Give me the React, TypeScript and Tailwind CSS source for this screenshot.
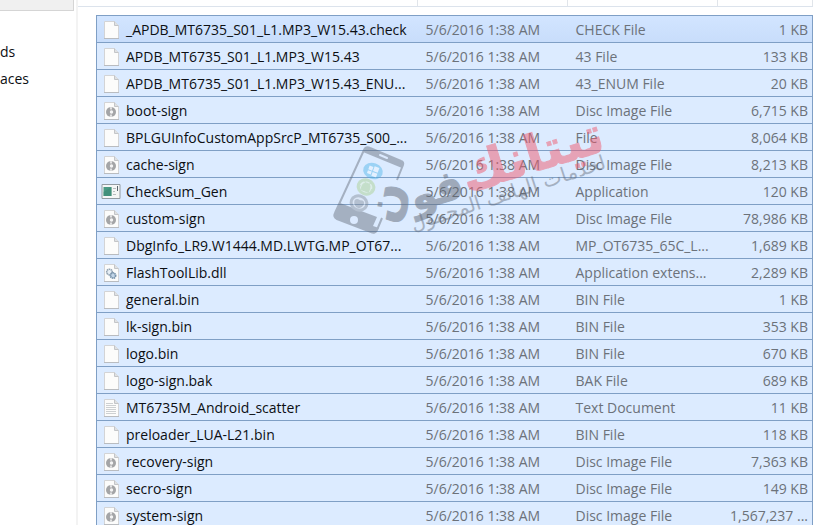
import type { ReactNode } from "react";

type Kind = "blank" | "disc" | "app" | "dll" | "text";

type FileRow = {
  name: string;
  type: string;
  size: string;
  kind: Kind;
};

const MODIFIED = "5/6/2016 1:38 AM";

const files: FileRow[] = [
  { name: "_APDB_MT6735_S01_L1.MP3_W15.43.check", type: "CHECK File", size: "1 KB", kind: "blank" },
  { name: "APDB_MT6735_S01_L1.MP3_W15.43", type: "43 File", size: "133 KB", kind: "blank" },
  { name: "APDB_MT6735_S01_L1.MP3_W15.43_ENU...", type: "43_ENUM File", size: "20 KB", kind: "blank" },
  { name: "boot-sign", type: "Disc Image File", size: "6,715 KB", kind: "disc" },
  { name: "BPLGUInfoCustomAppSrcP_MT6735_S00_...", type: "File", size: "8,064 KB", kind: "blank" },
  { name: "cache-sign", type: "Disc Image File", size: "8,213 KB", kind: "disc" },
  { name: "CheckSum_Gen", type: "Application", size: "120 KB", kind: "app" },
  { name: "custom-sign", type: "Disc Image File", size: "78,986 KB", kind: "disc" },
  { name: "DbgInfo_LR9.W1444.MD.LWTG.MP_OT67...", type: "MP_OT6735_65C_L...", size: "1,689 KB", kind: "blank" },
  { name: "FlashToolLib.dll", type: "Application extens...", size: "2,289 KB", kind: "dll" },
  { name: "general.bin", type: "BIN File", size: "1 KB", kind: "blank" },
  { name: "lk-sign.bin", type: "BIN File", size: "353 KB", kind: "blank" },
  { name: "logo.bin", type: "BIN File", size: "670 KB", kind: "blank" },
  { name: "logo-sign.bak", type: "BAK File", size: "689 KB", kind: "blank" },
  { name: "MT6735M_Android_scatter", type: "Text Document", size: "11 KB", kind: "text" },
  { name: "preloader_LUA-L21.bin", type: "BIN File", size: "118 KB", kind: "blank" },
  { name: "recovery-sign", type: "Disc Image File", size: "7,363 KB", kind: "disc" },
  { name: "secro-sign", type: "Disc Image File", size: "149 KB", kind: "disc" },
  { name: "system-sign", type: "Disc Image File", size: "1,567,237 ...", kind: "disc" },
];

const marks: Record<Kind, ReactNode> = {
  blank: null,
  app: null,
  disc: (
    <>
      <circle cx="10" cy="10" r="5" fill="#a4a5a7" />
      <path d="M8.500 5.200 10 8.500 11.500 5.200ZM8.500 14.800 10 11.500 11.500 14.800Z" fill="#e8e8e8" />
      <circle cx="10.500" cy="10" r="1.700" fill="#f4f4f4" />
    </>
  ),
  dll: (
    <>
      <circle cx="8.500" cy="8" r="2.800" fill="#e6eef5" stroke="#95a5b4" strokeWidth="1.600" strokeDasharray="1.500 .5" />
      <circle cx="12" cy="11.500" r="2.600" fill="#c2d5e7" stroke="#7893ab" strokeWidth="1.800" strokeDasharray="1.400 .5" />
    </>
  ),
  text: <path d="M5 4.500h7M5 6.500h10M5 8.500h10M5 10.500h10M5 12.500h10M5 14.500h10" stroke="#cdd0d2" />,
};

function FileIcon({ kind }: { kind: Kind }) {
  if (kind === "app") {
    return (
      <svg viewBox="0 0 20 18" className="h-[18px] w-5 shrink-0" aria-hidden="true">
        <path d="M1 1.500h18v14H1z" fill="#f5f6f6" stroke="#929ba2" />
        <path d="M2.500 4h8v9h-8z" fill="#4a9a84" />
        <path d="M2.500 9 10.500 4v9h-8z" fill="#378572" opacity=".5" />
        <path d="M12 5.500h3M12 8.500h2M12 11.500h3" stroke="#b9bec0" />
        <path d="M16.500 3v5" stroke="#59646b" />
      </svg>
    );
  }
  return (
    <svg viewBox="0 0 20 18" className="h-[18px] w-5 shrink-0" aria-hidden="true">
      <path d="M3.500.5h10l4 4v13h-14z" fill="#fcfcfb" stroke="#d3d4d6" />
      <path d="M3 17.500h15" stroke="#b9bcc0" />
      <path d="M13.500.5v4h4" fill="#dfe1e3" stroke="#c3c5c8" />
      {marks[kind]}
    </svg>
  );
}

function Watermark() {
  return (
    <svg
      viewBox="0 0 300 170"
      className="pointer-events-none absolute top-[84px] left-[330px] h-[170px] w-[300px] overflow-visible"
      role="img"
      aria-label="تيتانك فون"
    >
      {/* Phone */}
      <g opacity=".45" transform="translate(0 20)">
        <path
          d="M67 76 73 61Q74 58 71 57L40 44Q36 42 34 46L5 109Q3 113 7 115L41 128Q45 130 47 126L52 114"
          fill="none"
          stroke="#626a78"
          strokeWidth="2"
        />
        <path d="M34 46Q36 42 40 44L71 57Q74 58 73 61L72 64 33 48Z" fill="#626a78" />
        <path d="m50 51 7 3" stroke="#dceaff" strokeWidth="2" strokeLinecap="round" />
        <path d="M10 99 47 113 43 122 49 124 47 126Q45 130 41 128L7 115Q3 113 5 109Z" fill="#626a78" />
        <circle cx="24" cy="116" r="4" fill="#dceaff" />
        <g transform="translate(43 67) rotate(20)">
          <ellipse rx="10" ry="8" fill="#4db5ea" />
          <path d="M-5-4h4v4h-4zM0-5h5v5H0zM-5 1h4v3h-4zM0 1h5v4H0z" fill="#eef8ff" />
        </g>
        <g transform="translate(36 83) rotate(20)">
          <ellipse rx="8" ry="7" fill="#dff1d2" stroke="#a8d08b" strokeWidth="3" />
          <path d="M-4 0a4 4 0 0 1 8 0v4h-8zM-6 0v3M6 0v3M-2-4l-2-2M2-4l2-2" fill="#a8d08b" stroke="#a8d08b" />
        </g>
        <g transform="translate(29 99) rotate(20)">
          <ellipse rx="8" ry="7" fill="#dbe2ec" stroke="#858d98" strokeWidth="3" />
          <path d="M0-3Q5-5 5 0 4 5 1 5H-1Q-5 3-5-1-4-4 0-3ZM0-3l2-3" fill="#858d98" />
        </g>
      </g>
      <g fontFamily="'DejaVu Sans', sans-serif" direction="rtl">
        <text
          transform="translate(277 66) rotate(-17)"
          fontSize="51"
          fontWeight="bold"
          fill="#f05c70"
          stroke="#f05c70"
          opacity=".5"
        >
          تيتانك
        </text>
        <g fontWeight="bold" fill="#626a78" stroke="#626a78" opacity=".5">
          <text transform="translate(136 112) rotate(-17)" fontSize="42">فو</text>
          <text transform="translate(70 121) rotate(-80)" fontSize="47" textAnchor="middle">ن</text>
        </g>
        <text transform="translate(277 84) rotate(-18)" fontSize="20" fill="#626a78" opacity=".45">
          لخدمات الهاتف المحمول
        </text>
      </g>
    </svg>
  );
}

export default function App() {
  return (
    <div className="relative flex h-screen overflow-hidden bg-white font-['Open_Sans','Noto_Sans',sans-serif] text-sm text-[#0c0f13]">
      {/* Navigation pane, scrolled off to the left */}
      <nav className="w-[78px] shrink-0 border-r-2 border-[#f3f3f3]">
        <div className="h-[11px] w-[74px] border-r border-b border-[#d5d5d5] bg-[#f0f0f0]" />
        <div className="mt-[27px] flex flex-col">
          <a href="#downloads" className="leading-[27px]">ds</a>
          <a href="#places" className="leading-[27px]">aces</a>
        </div>
      </nav>

      <main className="min-w-0 flex-1 pr-[13px]">
        {/* Bottom edge of the column headings */}
        <div className="flex h-[7px] border-b border-[#dce3ec]">
          <div className="w-[340px] border-r border-[#e1e5ea]" />
          <div className="w-[150px] border-r border-[#e1e5ea]" />
          <div className="w-[150px] border-r border-[#e1e5ea]" />
          <div className="flex-1 border-r border-[#e1e5ea]" />
        </div>

        <div className="mt-2 pl-[18px]">
          <table className="w-full table-fixed border-collapse border border-[#7f9fc5]">
            <colgroup>
              <col className="w-[321px]" />
              <col className="w-[150px]" />
              <col />
              <col className="w-[100px]" />
            </colgroup>
            <tbody>
              {files.map((file, i) => (
                <tr
                  key={file.name}
                  className={`h-[27px] border-b border-[#7f9fc5] whitespace-nowrap ${i === 0 ? "bg-linear-to-b from-[#d2e5ff] to-[#c8ddfb]" : "bg-[#dcebff]"}`}
                >
                  <td className="p-0 pt-[2px] pl-1">
                    <div className="flex items-center gap-[5px]">
                      <FileIcon kind={file.kind} />
                      <span>{file.name}</span>
                    </div>
                  </td>
                  <td className="p-0 pt-[2px] pl-2 text-[#6c727a]">{MODIFIED}</td>
                  <td className="p-0 pt-[2px] pl-2 text-[#6c727a]">{file.type}</td>
                  <td className="p-0 pt-[2px] pr-1 text-right text-[#6c727a]">{file.size}</td>
                </tr>
              ))}
            </tbody>
          </table>
        </div>
      </main>
      <Watermark />
    </div>
  );
}
